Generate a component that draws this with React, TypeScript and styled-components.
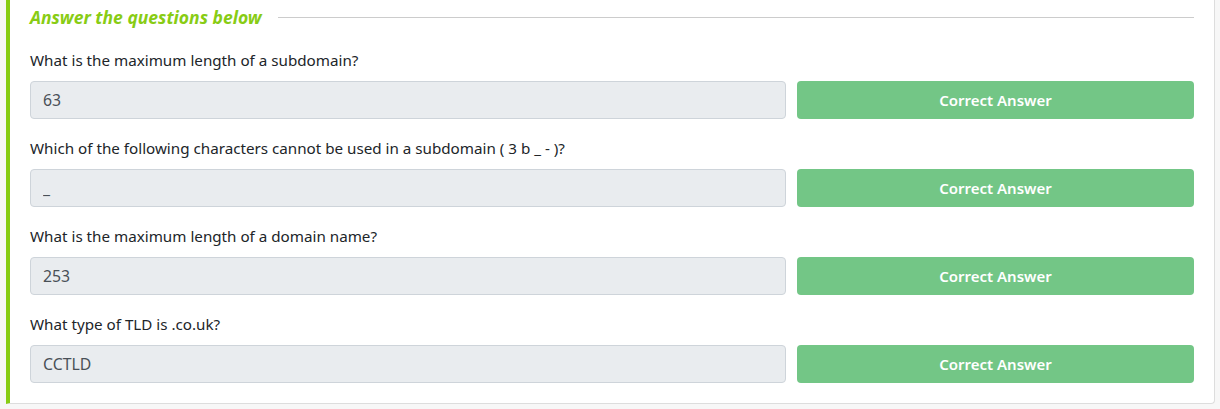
import styled, { createGlobalStyle } from "styled-components";

const GlobalStyle = createGlobalStyle`
    body {
        margin: 0;
        background-color: #f7f7f7;
        font-family: "Noto Sans", "Open Sans", sans-serif;
        color: #212529;
    }
`;

const Page = styled.div`
    padding: 0 5px 0 6px;
`;

const Card = styled.section`
    background-color: #ffffff;
    border: 1px solid #dddddd;
    border-top: none;
    border-left: 4px solid #88cc14;
    border-radius: 0 0 4px 0;
    padding: 0 20px 20px 20px;
`;

const Header = styled.div`
    display: flex;
    align-items: center;
    gap: 16px;
    height: 34px;
    margin-bottom: 16px;
`;

const Title = styled.h3`
    margin: 0;
    font-size: 17.5px;
    line-height: 22px;
    font-weight: 700;
    font-style: italic;
    color: #88cc14;
    white-space: nowrap;
`;

const Rule = styled.hr`
    flex: 1;
    border: 0;
    border-top: 1px solid #cccccc;
    margin: 0;
`;

const Questions = styled.div`
    display: flex;
    flex-direction: column;
    gap: 19px;
`;

const Question = styled.div`
    display: flex;
    flex-direction: column;
    gap: 10px;
`;

const Label = styled.label`
    font-size: 15.2px;
    line-height: 21px;
    color: #212529;
`;

const Row = styled.div`
    display: grid;
    grid-template-columns: 1fr 397px;
    gap: 11px;
`;

const AnswerInput = styled.input`
    box-sizing: border-box;
    height: 38px;
    padding: 0 12px;
    font-family: inherit;
    font-size: 15.8px;
    color: #495057;
    background-color: #e9ecef;
    border: 1px solid #ced4da;
    border-radius: 4px;
    outline: none;
`;

const SubmitButton = styled.button`
    height: 38px;
    border: 0;
    border-radius: 4px;
    background-color: #73c686;
    color: #ffffff;
    font-family: inherit;
    font-size: 15px;
    font-weight: 600;
    cursor: pointer;
`;

const items = [
    { q: "What is the maximum length of a subdomain?", a: "63" },
    { q: "Which of the following characters cannot be used in a subdomain ( 3 b _ - )?", a: "_" },
    { q: "What is the maximum length of a domain name?", a: "253" },
    { q: "What type of TLD is .co.uk?", a: "CCTLD" },
];

export default function App() {
    return (
        <>
            <GlobalStyle />
            <Page>
                <Card>
                    <Header>
                        <Title>Answer the questions below</Title>
                        <Rule />
                    </Header>
                    <Questions>
                        {items.map((item, i) => (
                            <Question key={i}>
                                <Label>{item.q}</Label>
                                <Row>
                                    <AnswerInput value={item.a} readOnly disabled />
                                    <SubmitButton>Correct Answer</SubmitButton>
                                </Row>
                            </Question>
                        ))}
                    </Questions>
                </Card>
            </Page>
        </>
    );
}
